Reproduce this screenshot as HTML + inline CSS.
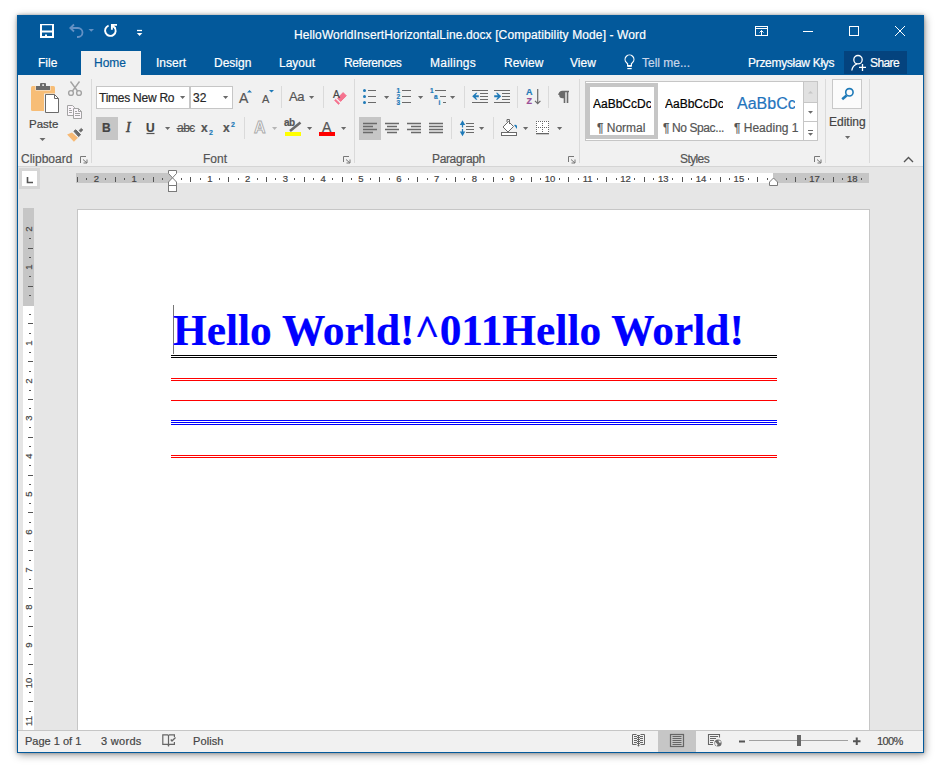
<!DOCTYPE html>
<html><head><meta charset="utf-8">
<style>
*{box-sizing:border-box}
html,body{margin:0;padding:0}
body{width:938px;height:765px;background:#fff;position:relative;overflow:hidden;font-family:"Liberation Sans",sans-serif;font-size:12px;color:#444}
.a{position:absolute}
.t{position:absolute;white-space:nowrap;line-height:14px;z-index:2;-webkit-text-stroke:0.2px currentColor}
.w{color:#fff}
svg{position:absolute;overflow:visible}
</style></head><body>
<!-- window shadow -->
<div class="a" style="left:17px;top:15px;width:907px;height:738px;box-shadow:0 0 3px rgba(0,0,0,.28),1px 2px 8px rgba(0,0,0,.38)"></div>
<!-- title bar + tab row -->
<div class="a" style="left:17px;top:15px;width:907px;height:60px;background:#03599b"></div>
<!-- ribbon -->
<div class="a" style="left:18px;top:75px;width:905px;height:92px;background:#f1f1f1;border-bottom:1px solid #d5d5d5"></div>
<!-- doc area -->
<div class="a" style="left:18px;top:167px;width:905px;height:563px;background:#e6e6e6"></div>
<!-- status bar -->
<div class="a" style="left:18px;top:730px;width:905px;height:22px;background:#f1f1f1;border-top:1px solid #c6c6c6"></div>
<!-- window border -->
<div class="a" style="left:17px;top:15px;width:907px;height:738px;border:1px solid #03599b;border-top:0"></div>

<!-- page -->
<div class="a" style="left:77px;top:209px;width:793px;height:521px;background:#fff;border:1px solid #c6c6c6;border-bottom:0"></div>
<div class="a" style="left:18px;top:730px;width:905px;height:1px;background:#c6c6c6"></div>

<!-- title text -->
<div class="t w" id="title" style="left:294px;top:28px;letter-spacing:0.11px">HelloWorldInsertHorizontalLine.docx [Compatibility Mode] - Word</div>

<!-- tabs -->
<div class="a" style="left:81px;top:51px;width:60px;height:24px;background:#f1f1f1"></div>
<div class="t w" style="left:38px;top:56px">File</div>
<div class="t" style="left:94px;top:56px;color:#03599b">Home</div>
<div class="t w" style="left:156px;top:56px">Insert</div>
<div class="t w" style="left:214px;top:56px">Design</div>
<div class="t w" style="left:279px;top:56px">Layout</div>
<div class="t w" style="left:344px;top:56px;letter-spacing:-0.4px">References</div>
<div class="t w" style="left:430px;top:56px;letter-spacing:0.25px">Mailings</div>
<div class="t w" style="left:504px;top:56px">Review</div>
<div class="t w" style="left:570px;top:56px">View</div>
<div class="t" style="left:642px;top:56px;color:#c9d6ea">Tell me...</div>
<div class="t w" style="left:748px;top:56px;letter-spacing:-0.3px">Przemysław Kłys</div>
<div class="a" style="left:844px;top:51px;width:63px;height:23px;background:#04437e"></div>
<div class="t w" style="left:870px;top:56px;letter-spacing:-0.6px">Share</div>

<!-- document content -->
<div class="a" style="left:173px;top:305px;width:1px;height:49px;background:#777"></div>
<div class="t" style="left:173px;top:307px;font-family:'Liberation Serif',serif;font-weight:bold;font-size:43.4px;line-height:47px;color:#0000ff">Hello World!^011Hello World!</div>
<div class="a" style="left:171px;top:355px;width:606px;height:1px;background:#000"></div>
<div class="a" style="left:171px;top:357px;width:606px;height:1px;background:#000"></div>
<div class="a" style="left:171px;top:378px;width:606px;height:1px;background:#f00"></div>
<div class="a" style="left:171px;top:380px;width:606px;height:1px;background:#f00"></div>
<div class="a" style="left:171px;top:400px;width:606px;height:1px;background:#f00"></div>
<div class="a" style="left:171px;top:420px;width:606px;height:1px;background:#00f"></div>
<div class="a" style="left:171px;top:422px;width:606px;height:1px;background:#00f"></div>
<div class="a" style="left:171px;top:424px;width:606px;height:1px;background:#00f"></div>
<div class="a" style="left:171px;top:455px;width:606px;height:1px;background:#f00"></div>
<div class="a" style="left:171px;top:457px;width:606px;height:1px;background:#f00"></div>


<div class="t" style="left:29px;top:117px;color:#444;font-size:11.5px">Paste</div>
<div class="t" style="left:21px;top:152px;color:#555">Clipboard</div>

<div class="t" style="left:99px;top:91px;color:#262626;letter-spacing:-0.25px">Times New Ro</div>
<div class="t" style="left:193px;top:91px;color:#262626">32</div>
<div class="t" style="left:239px;top:91px;color:#555;font-size:14px">A</div>
<div class="t" style="left:262px;top:92px;color:#555;font-size:11px">A</div>
<div class="t" style="left:289px;top:90px;color:#555;font-size:13px;letter-spacing:-0.5px">Aa</div>
<div class="t" style="left:333px;top:88px;color:#444;font-size:10px">A</div>
<div class="t" style="left:102px;top:121px;color:#444;font-weight:bold;font-size:12px">B</div>
<div class="t" style="left:126px;top:120.5px;color:#444;font-family:'Liberation Serif',serif;font-style:italic;font-size:14px;-webkit-text-stroke:0.5px #444">I</div>
<div class="t" style="left:146px;top:121px;color:#444;font-weight:bold;font-size:12px">U</div>
<div class="t" style="left:177px;top:121px;color:#555;font-size:12px;letter-spacing:-0.5px">abc</div>
<div class="t" style="left:201px;top:121px;color:#555;font-weight:bold;font-size:12px">x</div>
<div class="t" style="left:209px;top:126px;color:#1f7ab8;font-weight:bold;font-size:7px">2</div>
<div class="t" style="left:223px;top:121px;color:#555;font-weight:bold;font-size:12px">x</div>
<div class="t" style="left:231px;top:118px;color:#1f7ab8;font-weight:bold;font-size:7px">2</div>
<div class="t" style="left:254px;top:121px;color:#fdfdfd;font-size:16px;font-weight:bold;-webkit-text-stroke:0.9px #aaaaaa">A</div>
<div class="t" style="left:284px;top:116px;color:#555;font-size:10px;font-weight:bold;letter-spacing:-0.5px">ab</div>
<div class="t" style="left:322px;top:120px;color:#555;font-size:14px">A</div>
<div class="t" style="left:203px;top:152px;color:#555">Font</div>
<div class="t" style="left:396.5px;top:87.5px;color:#1f7ab8;font-size:6.5px;line-height:6px;font-weight:bold">1<br>2<br>3</div>
<div class="t" style="left:430px;top:87.5px;color:#1f7ab8;font-size:6.5px;line-height:6px;font-weight:bold">1</div><div class="t" style="left:434px;top:93.5px;color:#1f7ab8;font-size:6.5px;line-height:6px;font-weight:bold">a</div><div class="t" style="left:438.5px;top:99.5px;color:#1f7ab8;font-size:6.5px;line-height:6px;font-weight:bold">i</div>
<div class="t" style="left:526px;top:88.3px;color:#1f7ab8;font-size:9px;line-height:8px;font-weight:bold">A</div>
<div class="t" style="left:526.5px;top:97.3px;color:#9b4f96;font-size:9px;line-height:8px;font-weight:bold">Z</div>
<div class="t" style="left:432px;top:152px;color:#555;letter-spacing:-0.35px">Paragraph</div>
<div class="t" style="left:593px;top:97px;color:#000;font-size:12px;width:57.5px;overflow:hidden">AaBbCcDc</div>
<div class="t" style="left:597px;top:121px;color:#555">¶ Normal</div>
<div class="t" style="left:665px;top:97px;color:#000;font-size:12px;width:57.5px;overflow:hidden">AaBbCcDc</div>
<div class="t" style="left:663px;top:121px;color:#555;letter-spacing:-0.4px">¶ No Spac...</div>
<div class="t" style="left:737px;top:95px;color:#1f74bd;font-size:16px;line-height:17px;width:57.5px;overflow:hidden">AaBbCc</div>
<div class="t" style="left:734px;top:121px;color:#555">¶ Heading 1</div>
<div class="t" style="left:680px;top:152px;color:#555;letter-spacing:-0.6px">Styles</div>
<div class="t" style="left:829px;top:115px;color:#444">Editing</div>
<!-- status bar -->
<div class="t" style="left:25px;top:734px;font-size:11px">Page 1 of 1</div>
<div class="t" style="left:101px;top:734px;font-size:11px;letter-spacing:0.3px">3 words</div>
<div class="t" style="left:193px;top:734px;font-size:11px;letter-spacing:0.1px">Polish</div>
<div class="t" style="left:877px;top:734px;font-size:11px;letter-spacing:-0.6px">100%</div>


<!-- ICONS OVERLAY -->
<svg width="938" height="765" style="left:0;top:0" viewBox="0 0 938 765">
<!-- QAT -->
<path d="M40 24 H54 V38 H40 Z M42 25.2 V30.6 H52 V25.2 Z M42 32.6 V36 H45 V34.6 H47 V36 H52 V32.6 Z" fill="#fff" fill-rule="evenodd"/>
<g fill="none" stroke="#6491c4" stroke-width="1.8">
 <path d="M70 28 H78 A4.5 4.5 0 0 1 78 37 H77"/>
 <path d="M74 24.5 L70.3 28 L74 31.5"/>
</g>
<path d="M88.5 29 h5.5 l-2.75 2.8 z" fill="#6491c4"/>
<g fill="none" stroke="#fff" stroke-width="1.9">
 <path d="M108.6 25.6 A5.3 5.3 0 1 0 114.2 26.9"/>
 <path d="M111.9 29.8 V24.9 H117 M111.9 24.9 L115.3 28.3"/>
</g>
<path d="M137 30.5 h5" stroke="#fff" stroke-width="1.3"/>
<path d="M136.8 33 h5.6 l-2.8 3 z" fill="#fff"/>
<!-- title controls -->
<g fill="none" stroke="#fff" stroke-width="1">
 <rect x="755.5" y="26.5" width="12" height="9"/>
 <path d="M755.5 28.5 H767.5"/>
 <path d="M761.5 35 V30.5 M759.5 32.5 L761.5 30.5 L763.5 32.5"/>
 <path d="M803 31.5 H813"/>
 <rect x="849.5" y="26.5" width="9" height="9"/>
 <path d="M895 26 L905 36 M905 26 L895 36"/>
</g>
<!-- lightbulb -->
<g fill="none" stroke="#fff" stroke-width="1.2">
 <path d="M627.6 66 V63.8 L626.3 62.4 A4.4 4.4 0 1 1 632.7 62.4 L631.4 63.8 V66 Z"/>
 <path d="M627.3 68.6 H631.7"/>
</g>
<rect x="627.5" y="65" width="4" height="1.8" fill="#fff"/>
<!-- share person -->
<g fill="none" stroke="#fff" stroke-width="1.3">
 <circle cx="858" cy="59.7" r="4.2"/>
 <path d="M851.8 70.5 C852.3 67 854 65 857 64"/>
 <path d="M862.5 64 V71 M859 67.4 H866"/>
</g>

<!-- CLIPBOARD GROUP -->
<rect x="31" y="86" width="24" height="25" rx="1.5" fill="#f7bd76"/>
<rect x="35.5" y="86" width="15" height="4.5" fill="#f1f1f1"/>
<rect x="36" y="86" width="14" height="4" fill="#6a6a6a"/>
<rect x="40" y="83" width="6" height="4" rx="1" fill="#6a6a6a"/>
<rect x="42.3" y="84.3" width="1.6" height="1.6" fill="#fff"/>
<path d="M44 93.5 h11 l5 5 v15 h-16z" fill="#f1f1f1"/>
<path d="M45.5 94.5 H54.5 L58.5 98.5 V112.5 H45.5 Z" fill="#fff" stroke="#6a6a6a"/>
<path d="M54.5 94.5 V98.5 H58.5" fill="none" stroke="#6a6a6a"/>
<path d="M39.5 138 h6 l-3 3 z" fill="#6a6a6a"/>
<g fill="none" stroke="#a3a3a3" stroke-width="1.4">
 <circle cx="71" cy="93" r="2.4"/>
 <circle cx="79" cy="93" r="2.4"/>
 <path d="M70.5 81.5 L77.5 91 M79.5 81.5 L72.5 91"/>
</g>
<g stroke="#a3a3a3" stroke-width="1" fill="#fbf6fb">
 <path d="M67.5 105.5 H72.5 L74.5 107.5 V115.5 H67.5 Z"/>
 <path d="M73.5 108.5 H78.5 L81.5 111.5 V118.5 H73.5 Z"/>
 <path d="M78.5 108.5 V111.5 H81.5 M69 108.5 H71 M69 110.5 H72 M69 112.5 H72 M75 111.5 H77 M75 113.5 H80 M75 115.5 H80" fill="none"/>
</g>
<path d="M73.9 131.2 L75.8 129.8 L80.6 134.7 L78.6 136.6 Z" fill="#6a6a6a" stroke="#6a6a6a" stroke-linejoin="round"/>
<path d="M79.1 130.4 L81.3 128.4 L82.8 130 L80.7 132.1 Z" fill="#6a6a6a" stroke="#6a6a6a" stroke-width=".8" stroke-linejoin="round"/>
<path d="M67.1 134.4 L72 132.6 L78 137.8 L73.9 141.7 Z" fill="#f7b974"/>
<path d="M80.5 163 V156.5 H86" fill="none" stroke="#777"/>
<path d="M83 159.5 L87 163 M83.5 163 H87 V159.5" fill="none" stroke="#777"/>
<path d="M91.5 79 V163" stroke="#dadada"/>

<!-- FONT GROUP -->
<rect x="96.5" y="86.5" width="93" height="22" fill="#fff" stroke="#c6c6c6"/>
<rect x="190.5" y="86.5" width="42" height="22" fill="#fff" stroke="#c6c6c6"/>
<path d="M180 96 h5.2 l-2.6 3 z M223 96 h5.2 l-2.6 3 z" fill="#6a6a6a"/>
<path d="M247 92.5 L249.5 90 L252 92.5 Z M269 90 L274 90 L271.5 92.5 Z" fill="#1f7ab8"/>
<path d="M281.5 86 V108 M323.5 86 V108 M244.5 117 V139 M354.5 79 V163" stroke="#dadada"/>
<path d="M309 96 h5.2 l-2.6 3 z" fill="#6a6a6a"/>
<path d="M337.6 98.3 L343.1 92.6 L346.3 95.8 L340.6 101.4 Z" fill="#f5728e" stroke="#f5728e" stroke-linejoin="round"/>
<path d="M334.5 100.4 L335.6 99.3 L339.7 103.3 L338.5 104.5 Z" fill="#f5728e" stroke="#f5728e" stroke-width=".6" stroke-linejoin="round"/>
<rect x="96" y="117" width="22" height="23" fill="#c6c6c6"/>
<path d="M146.5 133.5 H154.5" stroke="#555" stroke-width="1.2"/>
<path d="M165 127 h5.2 l-2.6 3 z" fill="#6a6a6a"/>
<path d="M176.5 128.5 H193.5" stroke="#555" stroke-width="1"/>
<path d="M272 127 h5.2 l-2.6 3 z" fill="#b5b5b5"/>
<path d="M307 127 h5.2 l-2.6 3 z M341 127 h5.2 l-2.6 3 z" fill="#6a6a6a"/>
<rect x="285" y="132" width="16" height="4" fill="#ffff00"/>
<path d="M290 131 L300.5 122.5" stroke="#6a6a6a" stroke-width="2.6"/>
<rect x="319" y="132" width="16" height="4" fill="#ff0000"/>
<path d="M343.5 162 V156.5 H349" fill="none" stroke="#777"/>
<path d="M346 159.5 L350 163 M346.5 163 H350 V159.5" fill="none" stroke="#777"/>

<!-- PARAGRAPH GROUP -->
<g fill="#1f7ab8"><circle cx="364.5" cy="90.5" r="1.5"/><circle cx="364.5" cy="96.5" r="1.5"/><circle cx="364.5" cy="102.5" r="1.5"/></g>
<path d="M368 90.5 H376 M368 96.5 H376 M368 102.5 H376 M402 90.5 H411 M402 96.5 H411 M402 102.5 H411 M435 90.5 H446 M440 96.5 H446 M443 102.5 H446" stroke="#6a6a6a" stroke-width="1"/>
<path d="M384 96 h5.2 l-2.6 3 z M418 96 h5.2 l-2.6 3 z M450 96 h5.2 l-2.6 3 z" fill="#6a6a6a"/>
<path d="M464.5 86 V108 M517.5 86 V108 M548.5 86 V108 M451.5 117 V139 M493.5 117 V139 M579.5 79 V163" stroke="#dadada"/>
<g stroke="#6a6a6a" stroke-width="1">
 <path d="M472 90.5 H488 M480 93.5 H488 M480 96.5 H488 M480 99.5 H488 M472 102.5 H488"/>
 <path d="M494 90.5 H510 M502 93.5 H510 M502 96.5 H510 M502 99.5 H510 M494 102.5 H510"/>
</g>
<path d="M472.2 96.3 L476 92.8 L477.4 92.8 L475.6 95.3 H478.8 V97.3 H475.6 L477.4 99.8 H476 Z" fill="#1f7ab8"/>
<path d="M501.2 96.3 L497.4 92.8 L496 92.8 L497.8 95.3 H494.2 V97.3 H497.8 L496 99.8 H497.4 Z" fill="#1f7ab8"/>
<path d="M537.7 89 V103.5 M535 100.8 L537.7 103.6 L540.4 100.8" stroke="#6a6a6a" stroke-width="1.2" fill="none"/>
<path d="M559 95 a3.5 3.5 0 0 1 3.5 -3.5 h6.5 M564.5 91.5 V103 M567.5 91.5 V103" stroke="#6a6a6a" stroke-width="1.6" fill="none"/>
<path d="M559.2 95 a3.3 3.3 0 0 0 3.3 3.3 h2 v-6.8 h-2 a3.3 3.3 0 0 0 -3.3 3.5z" fill="#6a6a6a"/>
<rect x="359" y="117" width="22" height="23" fill="#c6c6c6"/>
<g stroke="#6a6a6a" stroke-width="1.3">
 <path d="M363 123.5 H377 M363 126.5 H373 M363 129.5 H377 M363 132.5 H373"/>
 <path d="M385 123.5 H399 M387 126.5 H397 M385 129.5 H399 M387 132.5 H397"/>
 <path d="M407 123.5 H421 M411 126.5 H421 M407 129.5 H421 M411 132.5 H421"/>
 <path d="M429 123.5 H443 M429 126.5 H443 M429 129.5 H443 M429 132.5 H443"/>
 <path d=""/>
</g>
<path d="M466 123.5 H474 M466 126.5 H474 M466 129.5 H474 M466 132.5 H474" stroke="#6a6a6a" stroke-width="1"/>
<path d="M462.5 124 V127.5 M462.5 129 V132.5" stroke="#1f7ab8" stroke-width="1.3"/>
<path d="M459.8 125 L462.5 120.3 L465.2 125 Z M459.8 131.5 L465.2 131.5 L462.5 136.2 Z" fill="#1f7ab8"/>
<path d="M479 127 h5.2 l-2.6 3 z M523 127 h5.2 l-2.6 3 z M557 127 h5.2 l-2.6 3 z" fill="#6a6a6a"/>
<rect x="501.5" y="132.5" width="15" height="3" fill="#fff" stroke="#6a6a6a"/>
<path d="M503 127 L508.5 121.5 L513.5 126.5 L508 132 Z" fill="#fff" stroke="#6a6a6a"/>
<path d="M507 122 V119.5 H509.5 V124" fill="none" stroke="#6a6a6a"/>
<path d="M514 125 a2.2 2.2 0 0 1 3 1 v3 z" fill="#1f7ab8"/>
<rect x="536" y="121" width="13" height="13" fill="#fff"/>
<path d="M536 121h1v1h-1zM536 123h1v1h-1zM536 125h1v1h-1zM536 127h1v1h-1zM536 129h1v1h-1zM536 131h1v1h-1zM538 121h1v1h-1zM538 127h1v1h-1zM540 121h1v1h-1zM540 127h1v1h-1zM542 121h1v1h-1zM542 123h1v1h-1zM542 125h1v1h-1zM542 127h1v1h-1zM542 129h1v1h-1zM542 131h1v1h-1zM544 121h1v1h-1zM544 127h1v1h-1zM546 121h1v1h-1zM546 127h1v1h-1zM548 121h1v1h-1zM548 123h1v1h-1zM548 125h1v1h-1zM548 127h1v1h-1zM548 129h1v1h-1zM548 131h1v1h-1z" fill="#666"/>
<rect x="536" y="133" width="13" height="1.3" fill="#666"/>
<path d="M568.5 162 V156.5 H574" fill="none" stroke="#777"/>
<path d="M571 159.5 L575 163 M571.5 163 H575 V159.5" fill="none" stroke="#777"/>

<!-- STYLES GROUP -->
<rect x="585.5" y="81.5" width="232" height="59" fill="#fff" stroke="#c6c6c6"/>
<rect x="588" y="85" width="68" height="52" fill="none" stroke="#c6c6c6" stroke-width="4"/>
<rect x="803.5" y="81.5" width="14" height="59" fill="#fff" stroke="#c6c6c6"/>
<rect x="804" y="82" width="13" height="20" fill="#e1e1e1"/>
<path d="M803.5 102.5 H817.5 M803.5 121.5 H817.5" stroke="#c6c6c6"/>
<path d="M808 93.5 h5 l-2.5 -2.5 z" fill="#c6c6c6"/>
<path d="M808 111 h5 l-2.5 2.8 z M808 133 h5 l-2.5 2.8 z" fill="#6a6a6a"/>
<path d="M808 130.5 H813" stroke="#6a6a6a"/>
<path d="M814.5 162 V156.5 H820" fill="none" stroke="#777"/>
<path d="M817 159.5 L821 163 M817.5 163 H821 V159.5" fill="none" stroke="#777"/>
<path d="M825.5 79 V163 M869.5 79 V163" stroke="#dadada"/>

<!-- EDITING -->
<rect x="832.5" y="79.5" width="29" height="29" fill="#fbfbfb" stroke="#c8c8c8"/>
<circle cx="849.4" cy="92.3" r="3.7" fill="none" stroke="#1f7ab8" stroke-width="1.6"/>
<path d="M846.6 95.6 L842.2 99.2" stroke="#1f7ab8" stroke-width="2.6"/>
<path d="M845 136 h5.2 l-2.6 3 z" fill="#6a6a6a"/>
<path d="M904 162 L908.5 157.5 L913 162" fill="none" stroke="#555" stroke-width="1.4"/>

<!-- RULERS & STATUS -->
<rect x="76" y="173" width="96" height="10" fill="#c6c6c6"/>
<rect x="172" y="173" width="601" height="10" fill="#fff"/>
<rect x="773" y="173" width="96" height="10" fill="#c6c6c6"/>
<path d="M77.5 177 V182 M115.5 177 V182 M153.5 177 V182 M190.5 177 V182 M228.5 177 V182 M266.5 177 V182 M304.5 177 V182 M342.5 177 V182 M379.5 177 V182 M417.5 177 V182 M455.5 177 V182 M493.5 177 V182 M531.5 177 V182 M568.5 177 V182 M606.5 177 V182 M644.5 177 V182 M682.5 177 V182 M720.5 177 V182 M757.5 177 V182 M795.5 177 V182 M833.5 177 V182 " stroke="#555" stroke-width="1"/>
<path d="M86.5 178 V180 M105.5 178 V180 M124.5 178 V180 M143.5 178 V180 M162.5 178 V180 M181.5 178 V180 M200.5 178 V180 M219.5 178 V180 M238.5 178 V180 M257.5 178 V180 M275.5 178 V180 M294.5 178 V180 M313.5 178 V180 M332.5 178 V180 M351.5 178 V180 M370.5 178 V180 M389.5 178 V180 M408.5 178 V180 M427.5 178 V180 M446.5 178 V180 M464.5 178 V180 M483.5 178 V180 M502.5 178 V180 M521.5 178 V180 M540.5 178 V180 M559.5 178 V180 M578.5 178 V180 M597.5 178 V180 M616.5 178 V180 M634.5 178 V180 M653.5 178 V180 M672.5 178 V180 M691.5 178 V180 M710.5 178 V180 M729.5 178 V180 M748.5 178 V180 M767.5 178 V180 M786.5 178 V180 M805.5 178 V180 M823.5 178 V180 M842.5 178 V180 M861.5 178 V180 " stroke="#555" stroke-width="1"/>
<path d="M168.5 170.5 H176.5 V173.5 L172.5 177.8 L168.5 173.5 Z" fill="#fff" stroke="#7a7a7a"/>
<path d="M172.5 177.8 L176.5 182 V185.5 H168.5 V182 Z" fill="#fff" stroke="#7a7a7a"/>
<rect x="168.5" y="185.5" width="8" height="6" fill="#fff" stroke="#7a7a7a"/>
<path d="M773.5 178 L777.5 182 V185.5 H769.5 V182 Z" fill="#fff" stroke="#7a7a7a"/>
<rect x="19" y="168" width="21" height="21" fill="#d6d6d6"/>
<rect x="22" y="171" width="15" height="15" fill="#fff"/>
<path d="M27.5 177 V182.5 H33" fill="none" stroke="#555" stroke-width="1.6"/>
<rect x="23" y="208" width="11" height="98" fill="#c6c6c6"/>
<rect x="23" y="306" width="11" height="424" fill="#fff"/>
<path d="M28 248.5 H33 M28 286.5 H33 M28 323.5 H33 M28 361.5 H33 M28 399.5 H33 M28 437.5 H33 M28 475.5 H33 M28 512.5 H33 M28 550.5 H33 M28 588.5 H33 M28 626.5 H33 M28 664.5 H33 M28 701.5 H33 " stroke="#555"/>
<path d="M29 238.5 H31 M29 257.5 H31 M29 276.5 H31 M29 295.5 H31 M29 314.5 H31 M29 333.5 H31 M29 352.5 H31 M29 371.5 H31 M29 390.5 H31 M29 408.5 H31 M29 427.5 H31 M29 446.5 H31 M29 465.5 H31 M29 484.5 H31 M29 503.5 H31 M29 522.5 H31 M29 541.5 H31 M29 560.5 H31 M29 579.5 H31 M29 597.5 H31 M29 616.5 H31 M29 635.5 H31 M29 654.5 H31 M29 673.5 H31 M29 692.5 H31 M29 711.5 H31 " stroke="#555"/>
<g fill="none" stroke="#666" stroke-width="1.2">
 <path d="M168.5 735.5 L167.5 734.8 H162.8 V744.4 H167.5 L168.5 745.3 L169.5 744.4 H174.4 V742"/>
 <path d="M174.4 737 V734.8 H169.5 L168.5 735.5 V746.5"/>
 <path d="M170.8 739.5 L172 740.9 L175.5 737.5" stroke-width="1.4"/>
</g>
<rect x="658" y="731" width="38" height="21" fill="#c6c6c6"/>
<g fill="none" stroke="#666" stroke-width="1">
 <path d="M636.5 734.5 H632.5 V744.5 H636.5 M640.5 734.5 H644.5 V744.5 H640.5"/>
 <path d="M634 736.5 H637 M634 738.5 H637 M634 740.5 H637 M634 742.5 H637 M640 736.5 H643 M640 738.5 H643 M640 740.5 H643 M640 742.5 H643"/>
 <path d="M638.5 735 V746.5 M637 735.5 H640 M637 737.5 H640 M637 739.5 H640 M637 741.5 H640 M637 743.5 H640 M637.5 745.5 H639.5"/>
 <rect x="670.5" y="734.5" width="13" height="12" stroke-width="1.2"/>
 <path d="M672.5 736.5 H681.5 M672.5 738.5 H681.5 M672.5 740.5 H681.5 M672.5 742.5 H681.5 M672.5 744.5 H681.5"/>
 <path d="M713 744.5 H708.5 V734.5 H719.5 V737.5" stroke-width="1.1"/>
 <path d="M710 736.5 H718 M710 738.5 H716 M710 740.5 H714 M710 742.5 H713"/>
</g>
<circle cx="718" cy="743" r="4.3" fill="#f1f1f1"/>
<circle cx="718" cy="743" r="3.6" fill="#6a6a6a"/>
<path d="M715 741.8 L717.6 744.2 L716.9 746.2 L715.2 744.8 Z M718.6 740.2 L720.9 741.3 L720.3 743.2 L718.8 741.9 Z" fill="#f1f1f1"/>
<path d="M739 741.5 H745" stroke="#555" stroke-width="2"/>
<path d="M749 740.5 H848" stroke="#a0a0a0"/>
<rect x="797" y="735" width="4" height="11" fill="#666"/>
<path d="M853 741.3 H860.5 M856.75 737.5 V745" stroke="#555" stroke-width="2"/>
</svg>
<div class="t" style="left:86.4px;top:173px;width:20px;text-align:center;font-size:9.5px;line-height:12px;color:#444">2</div>
<div class="t" style="left:124.2px;top:173px;width:20px;text-align:center;font-size:9.5px;line-height:12px;color:#444">1</div>
<div class="t" style="left:199.8px;top:173px;width:20px;text-align:center;font-size:9.5px;line-height:12px;color:#444">1</div>
<div class="t" style="left:237.6px;top:173px;width:20px;text-align:center;font-size:9.5px;line-height:12px;color:#444">2</div>
<div class="t" style="left:275.4px;top:173px;width:20px;text-align:center;font-size:9.5px;line-height:12px;color:#444">3</div>
<div class="t" style="left:313.2px;top:173px;width:20px;text-align:center;font-size:9.5px;line-height:12px;color:#444">4</div>
<div class="t" style="left:351.0px;top:173px;width:20px;text-align:center;font-size:9.5px;line-height:12px;color:#444">5</div>
<div class="t" style="left:388.8px;top:173px;width:20px;text-align:center;font-size:9.5px;line-height:12px;color:#444">6</div>
<div class="t" style="left:426.6px;top:173px;width:20px;text-align:center;font-size:9.5px;line-height:12px;color:#444">7</div>
<div class="t" style="left:464.4px;top:173px;width:20px;text-align:center;font-size:9.5px;line-height:12px;color:#444">8</div>
<div class="t" style="left:502.2px;top:173px;width:20px;text-align:center;font-size:9.5px;line-height:12px;color:#444">9</div>
<div class="t" style="left:540.0px;top:173px;width:20px;text-align:center;font-size:9.5px;line-height:12px;color:#444">10</div>
<div class="t" style="left:577.7px;top:173px;width:20px;text-align:center;font-size:9.5px;line-height:12px;color:#444">11</div>
<div class="t" style="left:615.5px;top:173px;width:20px;text-align:center;font-size:9.5px;line-height:12px;color:#444">12</div>
<div class="t" style="left:653.3px;top:173px;width:20px;text-align:center;font-size:9.5px;line-height:12px;color:#444">13</div>
<div class="t" style="left:691.1px;top:173px;width:20px;text-align:center;font-size:9.5px;line-height:12px;color:#444">14</div>
<div class="t" style="left:728.9px;top:173px;width:20px;text-align:center;font-size:9.5px;line-height:12px;color:#444">15</div>
<div class="t" style="left:804.5px;top:173px;width:20px;text-align:center;font-size:9.5px;line-height:12px;color:#444">17</div>
<div class="t" style="left:842.3px;top:173px;width:20px;text-align:center;font-size:9.5px;line-height:12px;color:#444">18</div>
<div class="t" style="left:18.5px;top:223.4px;width:20px;height:12px;text-align:center;font-size:9.5px;line-height:12px;color:#444;transform:rotate(-90deg)">2</div>
<div class="t" style="left:18.5px;top:261.2px;width:20px;height:12px;text-align:center;font-size:9.5px;line-height:12px;color:#444;transform:rotate(-90deg)">1</div>
<div class="t" style="left:18.5px;top:336.8px;width:20px;height:12px;text-align:center;font-size:9.5px;line-height:12px;color:#444;transform:rotate(-90deg)">1</div>
<div class="t" style="left:18.5px;top:374.6px;width:20px;height:12px;text-align:center;font-size:9.5px;line-height:12px;color:#444;transform:rotate(-90deg)">2</div>
<div class="t" style="left:18.5px;top:412.4px;width:20px;height:12px;text-align:center;font-size:9.5px;line-height:12px;color:#444;transform:rotate(-90deg)">3</div>
<div class="t" style="left:18.5px;top:450.2px;width:20px;height:12px;text-align:center;font-size:9.5px;line-height:12px;color:#444;transform:rotate(-90deg)">4</div>
<div class="t" style="left:18.5px;top:488.0px;width:20px;height:12px;text-align:center;font-size:9.5px;line-height:12px;color:#444;transform:rotate(-90deg)">5</div>
<div class="t" style="left:18.5px;top:525.8px;width:20px;height:12px;text-align:center;font-size:9.5px;line-height:12px;color:#444;transform:rotate(-90deg)">6</div>
<div class="t" style="left:18.5px;top:563.6px;width:20px;height:12px;text-align:center;font-size:9.5px;line-height:12px;color:#444;transform:rotate(-90deg)">7</div>
<div class="t" style="left:18.5px;top:601.4px;width:20px;height:12px;text-align:center;font-size:9.5px;line-height:12px;color:#444;transform:rotate(-90deg)">8</div>
<div class="t" style="left:18.5px;top:639.2px;width:20px;height:12px;text-align:center;font-size:9.5px;line-height:12px;color:#444;transform:rotate(-90deg)">9</div>
<div class="t" style="left:18.5px;top:677.0px;width:20px;height:12px;text-align:center;font-size:9.5px;line-height:12px;color:#444;transform:rotate(-90deg)">10</div>
<div class="t" style="left:18.5px;top:714.7px;width:20px;height:12px;text-align:center;font-size:9.5px;line-height:12px;color:#444;transform:rotate(-90deg)">11</div>
</body></html>
